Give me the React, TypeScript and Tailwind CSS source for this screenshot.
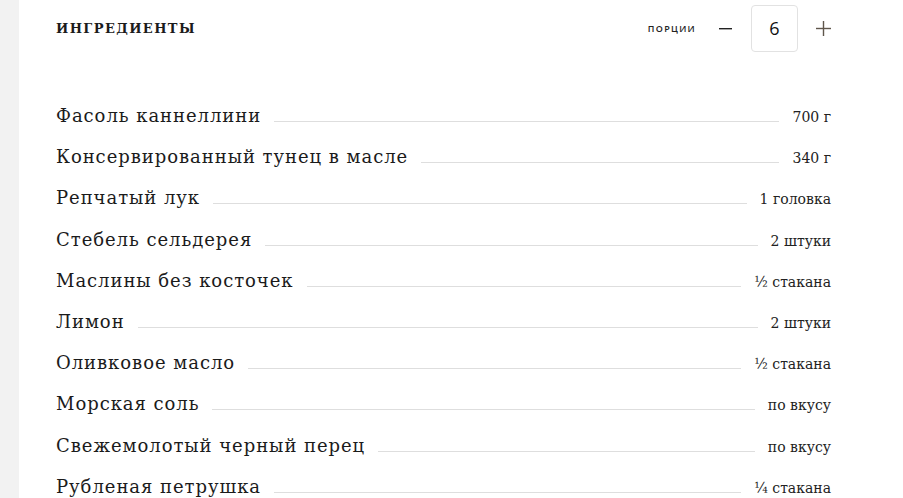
import React from 'react';

const ingredients: [string, string][] = [
  ['Фасоль каннеллини', '700 г'],
  ['Консервированный тунец в масле', '340 г'],
  ['Репчатый лук', '1 головка'],
  ['Стебель сельдерея', '2 штуки'],
  ['Маслины без косточек', '½ стакана'],
  ['Лимон', '2 штуки'],
  ['Оливковое масло', '½ стакана'],
  ['Морская соль', 'по вкусу'],
  ['Свежемолотый черный перец', 'по вкусу'],
  ['Рубленая петрушка', '¼ стакана'],
];

export default function App() {
  return (
    <div className="w-[903px] h-[498px] overflow-hidden flex bg-white">
      {/* серая полоса слева */}
      <div className="w-[19px] shrink-0 bg-[#f2f2f2]" />

      <div className="flex-1 pl-[37px] pr-[72px] pt-[5px] text-[#1b1b1b]">
        {/* шапка */}
        <div className="flex items-center h-[47px]">
          <h3 className="font-['DejaVu_Serif',serif] font-bold text-[13px] tracking-[1.4px] mt-[1px]">
            ИНГРЕДИЕНТЫ
          </h3>
          <div className="ml-auto flex items-center">
            <span className="font-['Open_Sans',sans-serif] font-semibold text-[9px] tracking-[1.3px] text-[#222] mr-[22px]">
              ПОРЦИИ
            </span>
            <button className="w-[14px] h-[14px] flex items-center justify-center mr-[19px]">
              <svg width="13" height="2" viewBox="0 0 13 2">
                <rect x="0" y="0" width="13" height="1.4" fill="#222" />
              </svg>
            </button>
            <div className="w-[47px] h-[47px] border border-[#e2e2e2] rounded-[4px] flex items-center justify-center font-['Open_Sans',sans-serif] text-[18px] text-[#111]">
              6
            </div>
            <button className="w-[15px] h-[15px] flex items-center justify-center ml-[18px]">
              <svg width="15" height="15" viewBox="0 0 15 15">
                <rect x="0" y="6.8" width="15" height="1.4" fill="#5f564b" />
                <rect x="6.8" y="0" width="1.4" height="15" fill="#5f564b" />
              </svg>
            </button>
          </div>
        </div>

        {/* список ингредиентов */}
        <ul className="mt-[43px]">
          {ingredients.map(([name, amount]) => (
            <li key={name} className="flex items-baseline h-[41.2px] leading-[41.2px]">
              <span className="font-['DejaVu_Serif',serif] text-[18px] tracking-[0.95px] whitespace-nowrap">
                {name}
              </span>
              <div className="flex-1 h-px bg-[#dedede] mx-[13px]" />
              <span className="font-['DejaVu_Serif',serif] text-[14px] text-[#222] whitespace-nowrap">
                {amount}
              </span>
            </li>
          ))}
        </ul>
      </div>
    </div>
  );
}
